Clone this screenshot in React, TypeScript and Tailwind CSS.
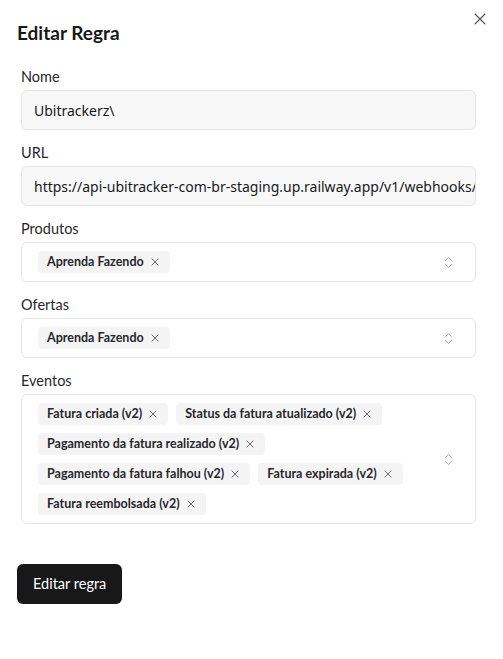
import { X, ChevronsUpDown } from "lucide-react";

const uiFont = { fontFamily: 'Lato, "Noto Sans", sans-serif' };
const inputFont = { fontFamily: '"Noto Sans", "Open Sans", sans-serif' };

function Tag({ label }: { label: string }) {
  return (
    <span className="inline-flex items-center gap-[5px] h-[22px] pl-[9px] pr-[9px] rounded-[4px] bg-[#f4f4f5] text-[12.5px] font-bold text-[#27272a]">
      {label}
      <X size={12} strokeWidth={1.5} className="text-[#3f3f46]" />
    </span>
  );
}

function Field({ label, children }: { label: string; children: React.ReactNode }) {
  return (
    <div className="flex flex-col">
      <label className="text-[14.5px] leading-5 text-[#27272a] mb-[3px]">{label}</label>
      {children}
    </div>
  );
}

function MultiSelect({ tags }: { tags: string[] }) {
  return (
    <div className="flex items-center min-h-[40px] rounded-md border border-[#e4e4e7] bg-white pl-4 pr-[19px] py-2">
      <div className="flex flex-wrap flex-1 gap-2">
        {tags.map((t) => (
          <Tag key={t} label={t} />
        ))}
      </div>
      <ChevronsUpDown size={15} strokeWidth={1.4} className="text-[#9ca3af] shrink-0" />
    </div>
  );
}

export default function App() {
  const eventos = [
    "Fatura criada (v2)",
    "Status da fatura atualizado (v2)",
    "Pagamento da fatura realizado (v2)",
    "Pagamento da fatura falhou (v2)",
    "Fatura expirada (v2)",
    "Fatura reembolsada (v2)",
  ];

  return (
    <div className="relative w-[503px] h-[659px] bg-white" style={uiFont}>
      <button className="absolute left-[470px] top-[9px] text-[#52525b]">
        <X size={20} strokeWidth={1.3} />
      </button>

      <div className="px-[17px] pt-[20px]">
        <h2 className="text-[19px] leading-[26px] font-bold text-[#18181b]">Editar Regra</h2>

        <div className="mt-[21px] ml-1 mr-[10px] flex flex-col gap-[13px]">
          <Field label="Nome">
            <div
              className="h-[40px] flex items-center rounded-md border border-[#e4e4e7] bg-[#f8f8f8] px-3 text-[14px] text-[#18181b]"
              style={inputFont}
            >
              Ubitrackerz\
            </div>
          </Field>

          <Field label="URL">
            <div
              className="h-[40px] flex items-center rounded-md border border-[#e4e4e7] bg-[#f8f8f8] px-3 text-[14px] text-[#18181b] overflow-hidden whitespace-nowrap"
              style={inputFont}
            >
              https://api-ubitracker-com-br-staging.up.railway.app/v1/webhooks/pagarme
            </div>
          </Field>

          <Field label="Produtos">
            <MultiSelect tags={["Aprenda Fazendo"]} />
          </Field>

          <Field label="Ofertas">
            <MultiSelect tags={["Aprenda Fazendo"]} />
          </Field>

          <Field label="Eventos">
            <MultiSelect tags={eventos} />
          </Field>
        </div>

        <button className="mt-[40px] h-[40px] px-4 rounded-md bg-[#18181b] text-white text-[14.5px]">
          Editar regra
        </button>
      </div>
    </div>
  );
}
